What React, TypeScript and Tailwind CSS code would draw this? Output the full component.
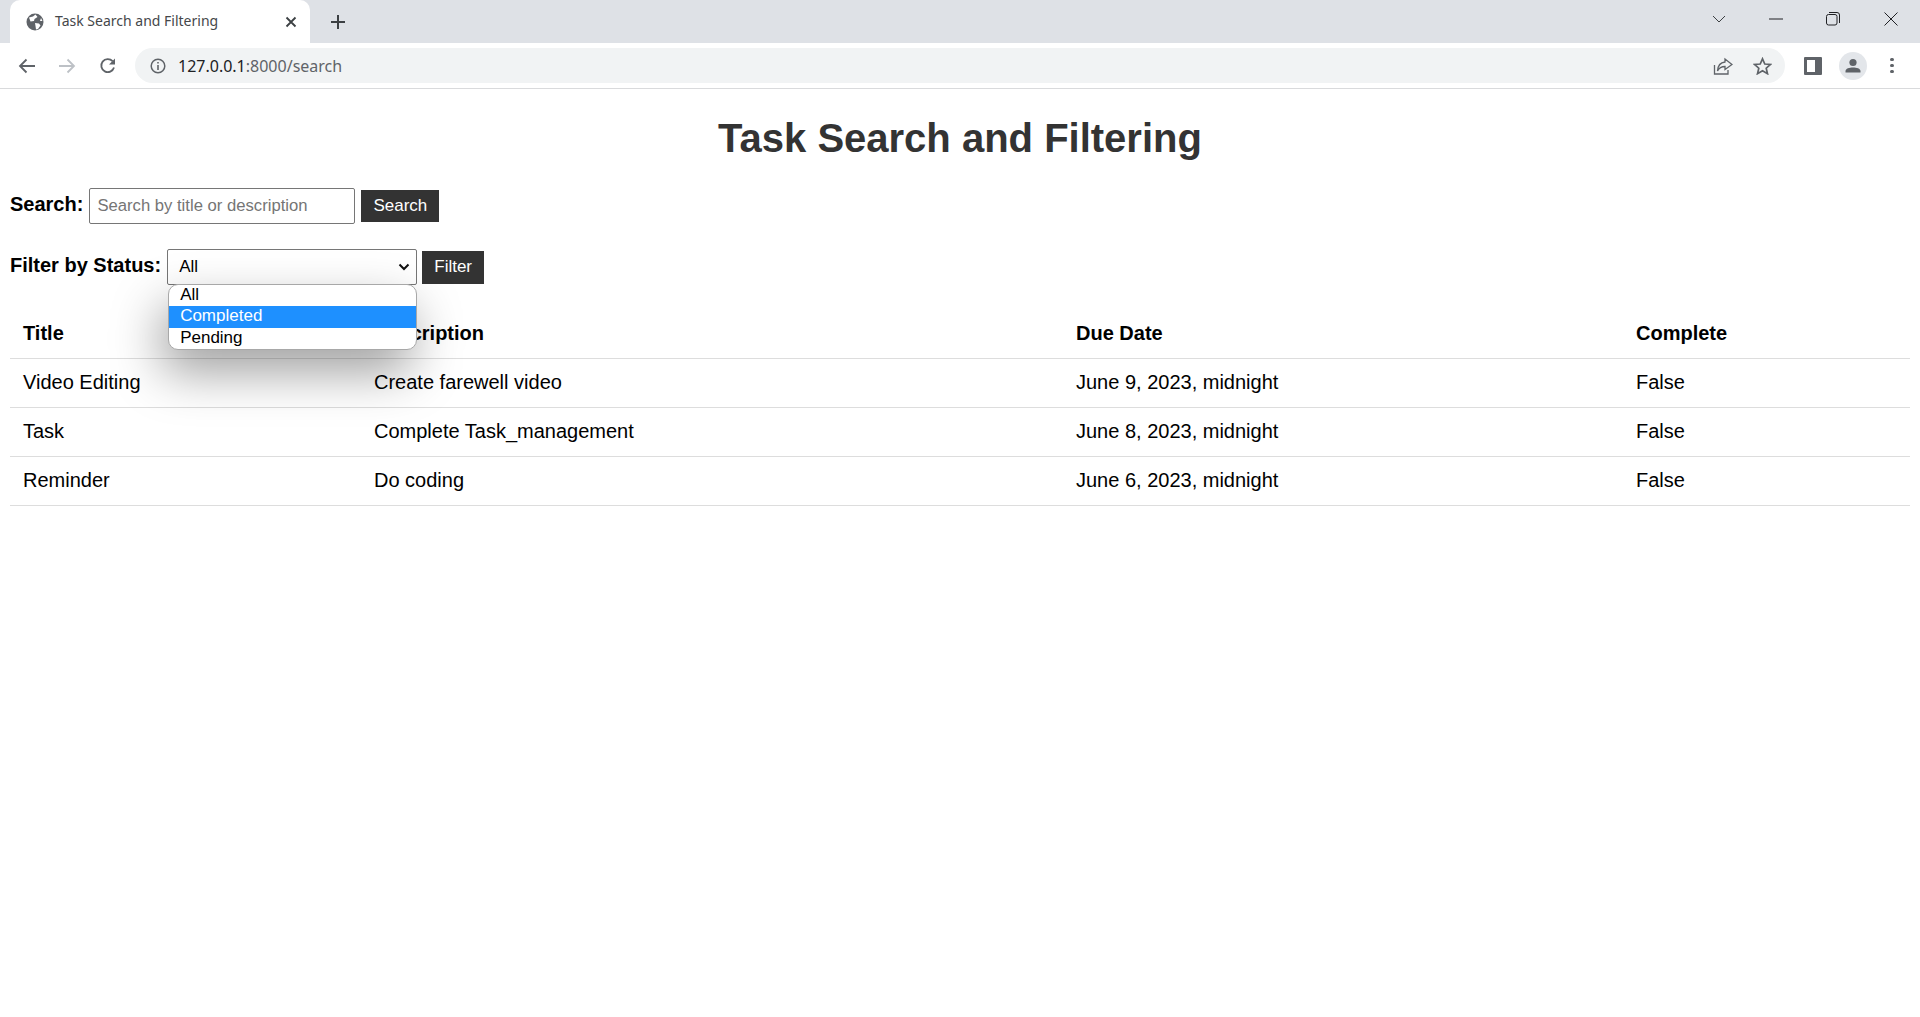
import type { FC } from "react";

const tasks = [
  { title: "Video Editing", description: "Create farewell video", due: "June 9, 2023, midnight", complete: "False" },
  { title: "Task", description: "Complete Task_management", due: "June 8, 2023, midnight", complete: "False" },
  { title: "Reminder", description: "Do coding", due: "June 6, 2023, midnight", complete: "False" },
];

const BrowserChrome: FC = () => (
  <div className="font-['Noto_Sans',sans-serif]">
    {/* tab strip */}
    <div className="flex h-[43px] items-end bg-[#dee1e6] pl-[10px]">
      <div className="flex h-[43px] w-[300px] items-center rounded-t-[10px] bg-white pl-[16px] pr-[12px]">
        <svg width="18" height="18" viewBox="0 0 18 18" className="shrink-0">
          <circle cx="9" cy="9" r="8.5" fill="#5f6368" />
          <path d="M3 4.5 L7 3.5 L9.5 1.5 L11.5 4 L8.5 6 L8 8 L4.5 8.5 Z M9 10 L13 10.5 L14.5 12.5 L12 16 L10 16.5 L9.5 13 Z M15 5 L16.5 8 L14 8 Z" fill="#fff" />
        </svg>
        <span className="mb-[2px] ml-[11px] flex-1 whitespace-nowrap text-[14px] leading-none text-[#45474a]">
          Task Search and Filtering
        </span>
        <svg width="12" height="12" viewBox="0 0 12 12" className="mr-[1px]">
          <path d="M1.5 1.5 L10.5 10.5 M10.5 1.5 L1.5 10.5" stroke="#3c4043" strokeWidth="1.8" />
        </svg>
      </div>
      <svg width="16" height="16" viewBox="0 0 16 16" className="mb-[13px] ml-[20px]">
        <path d="M8 1 V15 M1 8 H15" stroke="#3c4043" strokeWidth="2" />
      </svg>
      <div className="flex-1" />
      <div className="flex h-[43px] items-center">
        <svg width="14" height="8" viewBox="0 0 14 8" className="mb-[5px]">
          <path d="M1 1 L7 7 L13 1" fill="none" stroke="#3c4043" strokeWidth="1" />
        </svg>
        <svg width="14" height="2" viewBox="0 0 14 2" className="mb-[5px] ml-[43px]">
          <path d="M0 1 H14" stroke="#202124" strokeWidth="1" />
        </svg>
        <svg width="14" height="14" viewBox="0 0 14 14" className="mb-[5px] ml-[43px]">
          <rect x="0.5" y="2.5" width="10.5" height="10.5" rx="2" fill="none" stroke="#202124" />
          <path d="M3 .5 H11 Q13.5 .5 13.5 3 V11" fill="none" stroke="#202124" />
        </svg>
        <svg width="14" height="14" viewBox="0 0 14 14" className="mb-[5px] ml-[44px] mr-[22px]">
          <path d="M.5 .5 L13.5 13.5 M13.5 .5 L.5 13.5" stroke="#202124" strokeWidth="1" />
        </svg>
      </div>
    </div>
    {/* toolbar */}
    <div className="flex h-[46px] items-center border-b border-[#d9dadc] bg-white">
      <svg width="18" height="16" viewBox="0 0 18 16" className="ml-[18px]">
        <path d="M17 8 H2 M8.5 1.5 L2 8 L8.5 14.5" fill="none" stroke="#5f6368" strokeWidth="1.8" />
      </svg>
      <svg width="18" height="16" viewBox="0 0 18 16" className="ml-[22px]">
        <path d="M1 8 H16 M9.5 1.5 L16 8 L9.5 14.5" fill="none" stroke="#bdc1c6" strokeWidth="1.8" />
      </svg>
      <svg width="18" height="18" viewBox="0 0 18 18" className="ml-[23px]">
        <path d="M15 10.5 A6.5 6.5 0 1 1 13.6 4.2" fill="none" stroke="#5f6368" strokeWidth="1.8" />
        <path d="M16 1.5 V7.5 H10 Z" fill="#5f6368" />
      </svg>
      <div className="ml-[18px] flex h-[35px] w-[1650px] items-center rounded-full bg-[#f1f3f4] pl-[15px]">
        <svg width="16" height="16" viewBox="0 0 16 16">
          <circle cx="8" cy="8" r="6.8" fill="none" stroke="#5f6368" strokeWidth="1.5" />
          <path d="M8 7 V12 M8 4 V5.6" stroke="#5f6368" strokeWidth="1.6" />
        </svg>
        <span className="ml-[12px] whitespace-nowrap text-[16px] text-[#5f6368]">
          <span className="text-[#202124]">127.0.0.1</span>:8000/search
        </span>
        <div className="flex-1" />
        <svg width="20" height="18" viewBox="0 0 20 18" className="mr-[20px]">
          <path d="M1.5 8 V17 H15 V13" fill="none" stroke="#5f6368" strokeWidth="1.3" />
          <path d="M12 2 L19 7.5 L12 12.5 V9.5 C8 9.5 6 11 4.5 14 C4.8 9 7.5 5.5 12 5 Z" fill="none" stroke="#5f6368" strokeWidth="1.3" />
        </svg>
        <svg width="19" height="18" viewBox="0 0 19 18" className="mr-[13px]">
          <path d="M9.5 1.8 L11.8 7 L17.4 7.5 L13.2 11.2 L14.5 16.7 L9.5 13.8 L4.5 16.7 L5.8 11.2 L1.6 7.5 L7.2 7 Z" fill="none" stroke="#5f6368" strokeWidth="1.7" />
        </svg>
      </div>
      <div className="ml-[19px] flex h-[18px] w-[18px] items-center rounded-[1px] bg-[#5f6368] pl-[3px]">
        <div className="h-[12px] w-[8px] bg-white" />
      </div>
      <div className="ml-[17px] flex h-[28px] w-[28px] items-center justify-center rounded-full bg-[#e3e6ea]">
        <svg width="18" height="18" viewBox="0 0 18 18">
          <circle cx="9" cy="5.5" r="3.6" fill="#5f6368" />
          <path d="M1.5 15.5 V14 C1.5 11.5 5.5 10.5 9 10.5 C12.5 10.5 16.5 11.5 16.5 14 V15.5 Z" fill="#5f6368" />
        </svg>
      </div>
      <div className="ml-[23px] flex flex-col gap-[2.5px]">
        <span className="h-[3.5px] w-[3.5px] rounded-full bg-[#5f6368]" />
        <span className="h-[3.5px] w-[3.5px] rounded-full bg-[#5f6368]" />
        <span className="h-[3.5px] w-[3.5px] rounded-full bg-[#5f6368]" />
      </div>
    </div>
  </div>
);

export default function App() {
  return (
    <div className="min-h-[1017px] bg-white font-['Liberation_Sans',Arial,sans-serif] text-black">
      <BrowserChrome />

      <main className="px-[10px]">
        <h1 className="pt-[26px] text-center text-[40px] font-bold leading-[46px] text-[#333]">
          Task Search and Filtering
        </h1>

        <div className="mt-[27px] flex items-center">
          <label className="mb-[4px] text-[20px] font-bold">Search:</label>
          <input
            placeholder="Search by title or description"
            className="ml-[6px] h-[36px] w-[266px] rounded-[2px] border border-[#767676] px-[7px] text-[16.67px] outline-none placeholder:text-[#757575]"
          />
          <button className="ml-[6px] h-[32px] w-[78px] bg-[#333] text-[17px] text-white">Search</button>
        </div>

        <div className="mt-[25px] flex items-center">
          <label className="mb-[4px] text-[20px] font-bold">Filter by Status:</label>
          <div className="relative ml-[6px]">
            <div className="flex h-[36px] w-[250px] items-center justify-between rounded-[2px] border border-[#767676] bg-white pl-[11px] pr-[6px] text-[17px]">
              All
              <svg width="12" height="8" viewBox="0 0 12 8">
                <path d="M1.5 1.5 L6 6 L10.5 1.5" fill="none" stroke="#111" strokeWidth="2" />
              </svg>
            </div>
            <div className="absolute left-[1px] top-[35px] z-10 w-[249px] overflow-hidden rounded-[10px] border border-[#a8a8a8] bg-white text-[17px] shadow-[-6px_22px_50px_rgba(0,0,0,0.38)]">
              <div className="h-[21px] pl-[11px] leading-[19px]">All</div>
              <div className="h-[22px] bg-[#1e90ff] pl-[11px] leading-[20px] text-white">Completed</div>
              <div className="h-[21px] pl-[11px] leading-[20px]">Pending</div>
            </div>
          </div>
          <button className="ml-[5px] h-[33px] w-[62px] bg-[#333] text-[17px] text-white">Filter</button>
        </div>

        <table className="mt-[24px] w-[1900px] table-fixed border-collapse text-[20px]">
          <colgroup>
            <col className="w-[352px]" />
            <col className="w-[702px]" />
            <col className="w-[560px]" />
            <col className="w-[286px]" />
          </colgroup>
          <thead>
            <tr className="h-[49px] border-b border-[#ddd] text-left">
              <th className="pl-[13px] font-bold">Title</th>
              <th className="pl-[12px] font-bold">Description</th>
              <th className="pl-[12px] font-bold">Due Date</th>
              <th className="pl-[12px] font-bold">Complete</th>
            </tr>
          </thead>
          <tbody>
            {tasks.map(task => (
              <tr key={task.title} className="h-[49px] border-b border-[#ddd]">
                <td className="pb-[2px] pl-[13px]">{task.title}</td>
                <td className="pb-[2px] pl-[12px]">{task.description}</td>
                <td className="pb-[2px] pl-[12px]">{task.due}</td>
                <td className="pb-[2px] pl-[12px]">{task.complete}</td>
              </tr>
            ))}
          </tbody>
        </table>
      </main>
    </div>
  );
}
